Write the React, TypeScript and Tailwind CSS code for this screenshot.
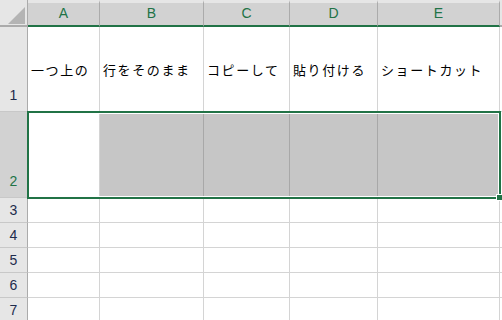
const cols = ['A', 'B', 'C', 'D', 'E']
const texts = ['一つ上の', '行をそのまま', 'コピーして', '貼り付ける', 'ショートカット']

const headFont = "font-['Liberation_Sans','Noto_Sans_CJK_JP',sans-serif]"

export default function App() {
  return (
    <div className="relative h-[320px] w-[502px] overflow-hidden bg-white">
      <div className="grid grid-cols-[28px_72px_104px_86px_88px_122px_2px] grid-rows-[27px_85px_86px_25px_25px_25px_25px_25px]">
        {/* header row */}
        <div className="relative border-b-2 border-r border-b-[#ababab] border-r-[#ababab] bg-[#e6e6e6]">
          <svg className="absolute left-[8px] top-[7px]" width="17" height="17" viewBox="0 0 17 17">
            <polygon points="17,0 17,17 0,17" fill="#b4b4b4" />
          </svg>
        </div>
        {cols.map((c) => (
          <div
            key={c}
            className={`flex items-center justify-center border-b-2 border-r border-t-[3px] border-b-[#217346] border-r-[#ababab] border-t-[#e6e6e6] bg-[#d2d2d2] pb-[1px] text-[14px] text-[#217346] ${headFont}`}
          >
            {c}
          </div>
        ))}
        <div className="border-b-2 border-b-[#ababab] bg-[#e6e6e6]" />

        {/* row 1 */}
        <div className={`flex items-end justify-center border-b border-r border-b-[#c8c8c8] border-r-[#ababab] bg-[#e6e6e6] pb-[5px] text-[14px] text-[#1e2c4d] ${headFont}`}>
          1
        </div>
        {texts.map((t) => (
          <div
            key={t}
            className="flex items-center whitespace-nowrap border-b border-r border-[#d4d4d4] pl-[3px] pt-[1px] font-['Noto_Sans_CJK_JP',sans-serif] text-[13px] tracking-[1.6px] text-black"
          >
            {t}
          </div>
        ))}
        <div className="border-b border-[#d4d4d4]" />

        {/* row 2 (selected) */}
        <div className={`flex items-end justify-center border-b border-r border-b-[#c8c8c8] border-r-[#ababab] bg-[#d2d2d2] pb-[5px] text-[14px] text-[#217346] ${headFont}`}>
          2
        </div>
        <div className="border-b border-r border-[#d4d4d4] bg-white" />
        {cols.slice(1).map((c) => (
          <div key={c} className="border-b border-r border-b-[#d4d4d4] border-r-[#a8a8a8] bg-[#c6c6c6]" />
        ))}
        <div className="border-b border-[#d4d4d4]" />

        {/* rows 3-7 */}
        {[3, 4, 5, 6, 7].map((n) => (
          <Row key={n} n={n} />
        ))}
      </div>

      {/* selection frame */}
      <div className="absolute left-[27px] top-[111px] h-[88px] w-[474px] border-2 border-[#217346] shadow-[inset_0_0_0_1px_#fff]" />
      <div className="absolute left-[496px] top-[194px] h-[7px] w-[7px] border border-white bg-[#217346]" />
    </div>
  )
}

function Row({ n }: { n: number }) {
  return (
    <>
      <div className={`flex items-center justify-center border-b border-r border-b-[#c8c8c8] border-r-[#ababab] bg-[#e6e6e6] pt-[1px] text-[14px] text-[#1e2c4d] ${headFont}`}>
        {n}
      </div>
      {cols.map((c) => (
        <div key={c} className="border-b border-r border-[#d4d4d4]" />
      ))}
      <div className="border-b border-[#d4d4d4]" />
    </>
  )
}
